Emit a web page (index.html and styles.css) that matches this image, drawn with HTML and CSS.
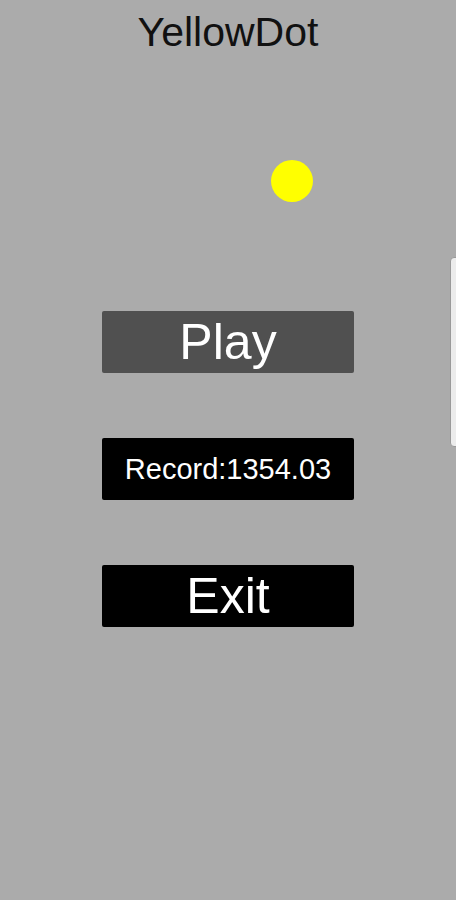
FILE: index.html
```html
<!DOCTYPE html>
<html lang="en">
  <head>
    <meta charset="UTF-8" />
    <meta name="viewport" content="width=device-width, initial-scale=1.0" />
    <title>YellowDot</title>
    <link rel="stylesheet" href="styles.css">
  </head>
  <body>
    <div class="screen">
      <h1 class="title">YellowDot</h1>
      <div class="field">
        <div class="dot"></div>
      </div>
      <div class="menu">
        <button class="btn btn-play">Play</button>
        <div class="btn btn-record">Record:1354.03</div>
        <button class="btn btn-exit">Exit</button>
      </div>
      <div class="edge-handle"></div>
    </div>
  </body>
</html>
```

FILE: styles.css
```css
body {
  margin: 0;
  font-family: "Liberation Sans", Arial, sans-serif;
  background-color: #ababab;
}
.screen {
  position: relative;
  width: 456px;
  height: 900px;
  background-color: #ababab;
  overflow: hidden;
}
.title {
  margin: 0;
  padding-top: 10px;
  text-align: center;
  font-size: 41px;
  font-weight: normal;
  line-height: 44px;
  color: #111;
}
.field {
  height: 257px;
  position: relative;
}
.dot {
  position: absolute;
  left: 271px;
  top: 106px;
  width: 42px;
  height: 42px;
  border-radius: 50%;
  background-color: #ffff00;
}
.menu {
  display: flex;
  flex-direction: column;
  align-items: center;
  gap: 65px;
}
.btn {
  width: 252px;
  height: 62px;
  border: none;
  border-radius: 2px;
  color: #fff;
  font-family: "Liberation Sans", Arial, sans-serif;
  display: flex;
  align-items: center;
  justify-content: center;
  padding: 0;
}
.btn-play {
  background-color: #505050;
  font-size: 50px;
}
.btn-record {
  background-color: #000;
  font-size: 29px;
}
.btn-exit {
  background-color: #000;
  font-size: 50px;
}
.edge-handle {
  position: absolute;
  right: -4px;
  top: 257px;
  width: 8px;
  height: 188px;
  border-radius: 4px;
  background-color: #ececec;
  border: 1px solid #9a9a9a;
}
```
